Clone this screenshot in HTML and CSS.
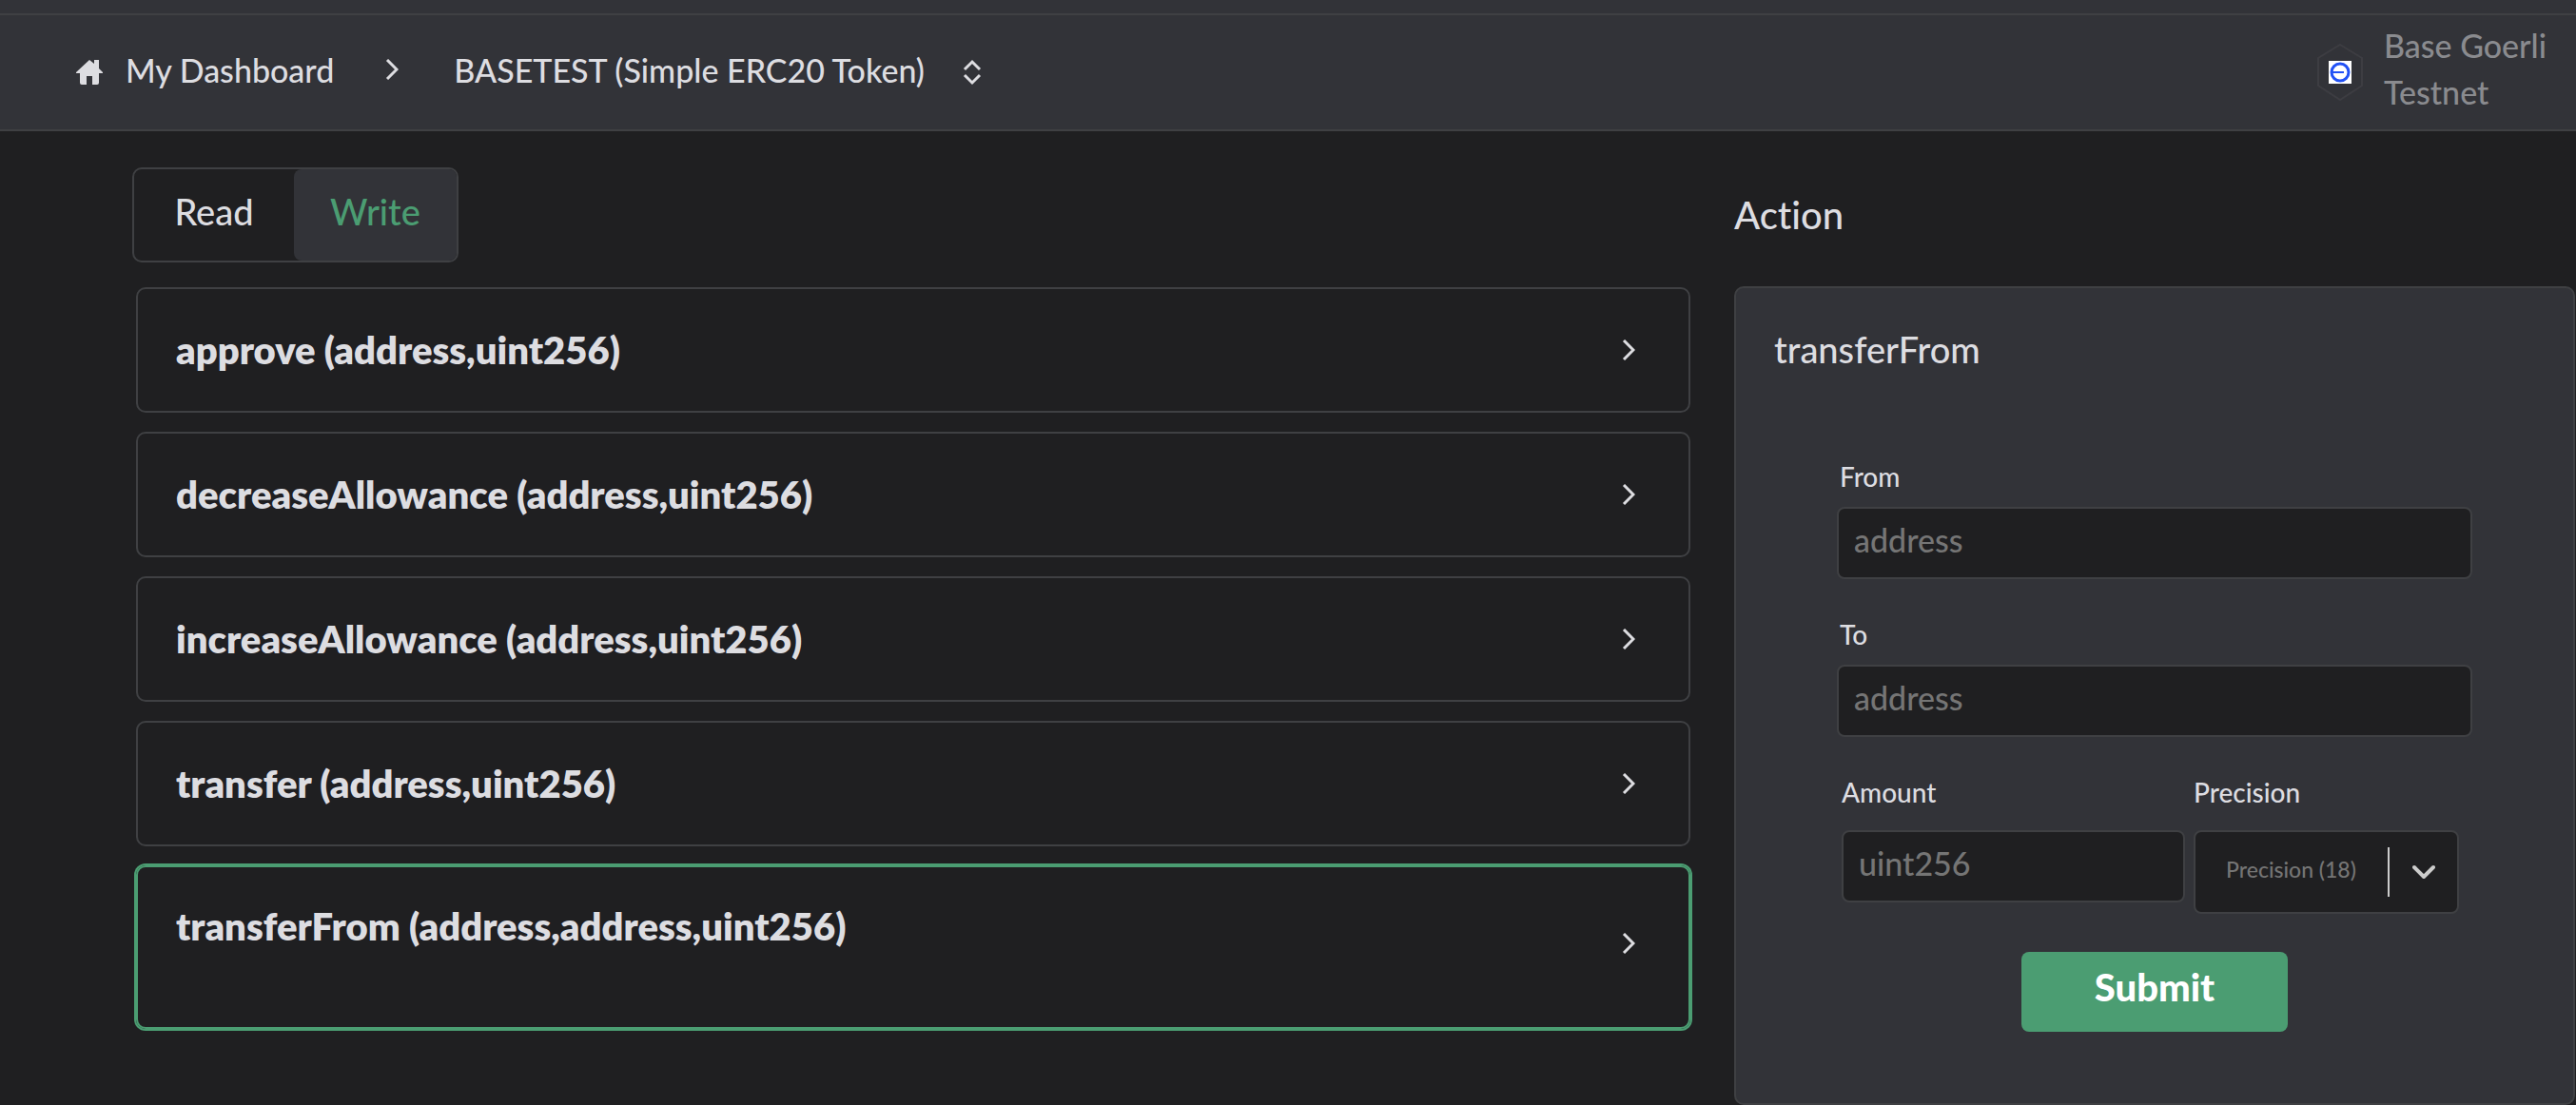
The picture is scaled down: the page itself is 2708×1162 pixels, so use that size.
FILE: index.html
```html
<!DOCTYPE html>
<html lang="en">
<head>
<meta charset="utf-8">
<meta name="viewport" content="width=device-width, initial-scale=1">
<title>BASETEST – Contract actions</title>
<link rel="stylesheet" href="styles.css">
</head>
<body>
<header class="topbar">
  <nav class="crumbs" aria-label="Breadcrumb">
    <a class="crumb" href="#dashboard">
      <svg class="home" viewBox="0 0 28 26" aria-hidden="true"><path d="M14 0 0 13v1h4v10q0 2 2 2h5v-9h6v9h5q2 0 2-2V14h4v-1l-4-4V0h-5v4z" fill="currentColor"/></svg>
      <span>My Dashboard</span>
    </a>
    <svg class="sep" viewBox="0 0 14 22" aria-hidden="true"><path d="M2 1l10 10L2 21" /></svg>
    <button class="crumb" type="button">
      <span>BASETEST (Simple ERC20 Token)</span>
      <svg class="updown" viewBox="0 0 20 28" aria-hidden="true"><path d="M2 11l8-8 8 8M2 17l8 8 8-8"/></svg>
    </button>
  </nav>
  <div class="network">
    <svg class="chain" viewBox="0 0 48 60" aria-hidden="true">
      <path d="M24 1 47 15v29L24 59 1 44V15z" fill="none" stroke="#3d3d42" stroke-width="2"/>
      <path d="M12 18h24v24H12z" fill="#fff"/>
      <circle cx="24" cy="30" r="9" fill="none" stroke="#2151f5" stroke-width="3"/>
      <path d="M16 30h12" stroke="#2151f5" stroke-width="2"/>
    </svg>
    <span class="network-name">Base Goerli Testnet</span>
  </div>
</header>
<main class="layout">
  <section class="methods">
    <div class="tabs" role="tablist">
      <button class="tab" type="button" role="tab" aria-selected="false">Read</button>
      <button class="tab active" type="button" role="tab" aria-selected="true">Write</button>
    </div>
    <div class="list">
      <button class="method" type="button"><span>approve (address,uint256)</span><svg class="chev" viewBox="0 0 14 22" aria-hidden="true"><path d="M2 1l10 10L2 21"/></svg></button>
      <button class="method" type="button"><span>decreaseAllowance (address,uint256)</span><svg class="chev" viewBox="0 0 14 22" aria-hidden="true"><path d="M2 1l10 10L2 21"/></svg></button>
      <button class="method" type="button"><span>increaseAllowance (address,uint256)</span><svg class="chev" viewBox="0 0 14 22" aria-hidden="true"><path d="M2 1l10 10L2 21"/></svg></button>
      <button class="method" type="button"><span>transfer (address,uint256)</span><svg class="chev" viewBox="0 0 14 22" aria-hidden="true"><path d="M2 1l10 10L2 21"/></svg></button>
      <button class="method selected" type="button"><span>transferFrom (address,address,uint256)</span><svg class="chev" viewBox="0 0 14 22" aria-hidden="true"><path d="M2 1l10 10L2 21"/></svg></button>
    </div>
  </section>
  <section class="action">
    <h1 class="heading">Action</h1>
    <form class="panel">
      <h2 class="title">transferFrom</h2>
      <div class="fields">
        <div class="field">
          <label for="from">From</label>
          <input id="from" type="text" placeholder="address">
        </div>
        <div class="field">
          <label for="to">To</label>
          <input id="to" type="text" placeholder="address">
        </div>
        <div class="pair">
          <div class="field">
            <label for="amount">Amount</label>
            <input id="amount" type="text" placeholder="uint256">
          </div>
          <div class="field">
            <label for="precision">Precision</label>
            <div class="select">
              <select id="precision"><option>Precision (18)</option></select>
              <span class="arrow"><svg viewBox="0 0 24 16" aria-hidden="true"><path d="M2 3l10 10L22 3"/></svg></span>
            </div>
          </div>
        </div>
        <button class="submit" type="submit">Submit</button>
      </div>
    </form>
  </section>
</main>
</body>
</html>
```
FILE: styles.css
```css
* { box-sizing: border-box; }

:root {
  --bg: #1f1f21;
  --surface: #323338;
  --line: #3f4043;
  --text: #dddde1;
  --muted: #757575;
  --green: #4b9d72;
}

body {
  margin: 0;
  min-height: 100vh;
  display: flex;
  flex-direction: column;
  background: var(--bg);
  color: var(--text);
  font-family: Lato, "Liberation Sans", sans-serif;
  font-size: 34px;
  font-weight: 500;
  font-variant-ligatures: none;
  line-height: 48px;
}

button, input, select { font: inherit; color: inherit; margin: 0; }
button { background: none; border: 0; padding: 0; cursor: pointer; }
svg { display: block; flex: none; }

.topbar {
  display: flex;
  align-items: center;
  justify-content: space-between;
  height: 138px;
  padding: 16px 8px 0 80px;
  background: linear-gradient(var(--line), var(--line)) 0 14px / 100% 2px no-repeat var(--surface);
  border-bottom: 2px solid var(--line);
}

.crumbs, .crumb { display: flex; align-items: center; }
.crumb { gap: 24px; color: inherit; text-decoration: none; }
.crumb span { padding-bottom: 4px; }
button.crumb { gap: 40px; }
.home { width: 28px; height: 26px; }
.sep, .chev { width: 14px; height: 22px; }
.sep { margin: 0 58px 6px 54px; }
.updown { width: 20px; height: 28px; }
.sep, .chev, .updown { fill: none; stroke: currentColor; stroke-width: 3; }

.network { display: flex; align-items: center; gap: 22px; color: #8a8b8f; }
.chain { width: 48px; height: 60px; }
.network-name { width: 194px; padding-bottom: 8px; line-height: 49px; }

.layout {
  flex: 1;
  display: grid;
  grid-template-columns: minmax(0, 1638fr) minmax(0, 884fr);
  gap: 46px;
  padding-left: 139px;
  padding-right: 1px;
}

.methods { padding-top: 38px; }

.tabs {
  display: flex;
  width: fit-content;
  height: 100px;
  border: 2px solid var(--line);
  border-radius: 10px;
  font-size: 38px;
}
.tab { width: 168px; padding-bottom: 8px; }
.tab.active { width: 171px; background: var(--surface); border-radius: 8px; color: var(--green); }

.list { display: flex; flex-direction: column; gap: 20px; margin: 26px 0 0 4px; }
.method {
  display: flex;
  justify-content: space-between;
  align-items: center;
  height: 132px;
  padding: 0 56px 0 40px;
  border: 2px solid var(--line);
  border-radius: 10px;
  font-size: 40px;
  font-weight: 800;
}
.method.selected {
  height: 172px;
  padding-bottom: 8px;
  border-color: var(--green);
  box-shadow: 0 0 0 2px var(--green);
}
.method.selected span { padding-bottom: 36px; }

.action { display: flex; flex-direction: column; padding-top: 64px; }
.heading { margin: 0; font-size: 40px; font-weight: 500; line-height: 48px; }
.panel {
  flex: 1;
  margin-top: 51px;
  padding: 40px 106px 0;
  background: var(--surface);
  border: 2px solid var(--line);
  border-radius: 10px;
}
.title { margin: 0 -66px 86px; font-size: 38px; font-weight: 500; line-height: 48px; }
.fields { display: flex; flex-direction: column; }
.field { display: flex; flex-direction: column; gap: 8px; margin-bottom: 34px; }
.field label { padding-left: 3px; font-size: 28px; line-height: 48px; }
.field input {
  width: 100%;
  height: 76px;
  padding: 0 16px 8px;
  background: var(--bg);
  border: 2px solid var(--line);
  border-radius: 8px;
  outline: 0;
}
.field input::placeholder { color: var(--muted); opacity: 1; }

.pair { display: grid; grid-template-columns: minmax(0, 361fr) minmax(0, 279fr); gap: 9px; padding: 0 14px 0 5px; }
.pair .field { margin-bottom: 40px; gap: 16px; }
.pair label { padding-left: 0; }
.select { display: grid; height: 88px; }
.select > * { grid-area: 1 / 1; }
.select select {
  appearance: none;
  padding: 0 32px 6px;
  background: var(--bg);
  border: 2px solid var(--line);
  border-radius: 8px;
  color: var(--muted);
  font-size: 23px;
}
.arrow {
  justify-self: end;
  align-self: center;
  display: flex;
  align-items: center;
  height: 52px;
  margin-right: 25px;
  padding-left: 24px;
  border-left: 2px solid #ccc;
  pointer-events: none;
}
.arrow svg { width: 24px; height: 16px; fill: none; stroke: #ccc; stroke-width: 4; stroke-linecap: round; stroke-linejoin: round; }

.submit {
  align-self: center;
  width: 280px;
  height: 84px;
  padding-bottom: 10px;
  background: var(--green);
  border-radius: 8px;
  color: #fff;
  font-size: 40px;
  font-weight: 900;
}
```
